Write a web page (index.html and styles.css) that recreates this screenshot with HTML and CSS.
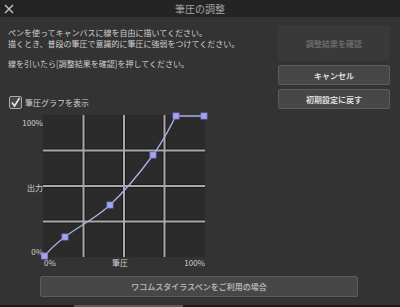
FILE: index.html
```html
<!DOCTYPE html>
<html lang="ja">
<head>
  <meta charset="UTF-8" />
  <title>筆圧の調整</title>
  <link rel="stylesheet" href="styles.css">
</head>
<body>
  <div class="dialog">
    <div class="titlebar">
      <svg class="close" width="10" height="10" viewBox="0 0 10 10">
        <path d="M1 1 L9 9 M9 1 L1 9" stroke="#c4c4c4" stroke-width="1.4" fill="none"/>
      </svg>
      <span class="title">筆圧の調整</span>
    </div>

    <div class="main">
      <div class="left">
        <div class="desc">
          <p>ペンを使ってキャンバスに線を自由に描いてください。<br>描くとき、普段の筆圧で意識的に筆圧に強弱をつけてください。</p>
          <p class="gap">線を引いたら[調整結果を確認]を押してください。</p>
        </div>

        <label class="check">
          <span class="box">
            <svg width="11" height="11" viewBox="0 0 11 11">
              <path d="M2 5.5 L4.5 9 L9.5 1" stroke="#e6e6e6" stroke-width="1.6" fill="none"/>
            </svg>
          </span>
          筆圧グラフを表示
        </label>

        <div class="graph-wrap">
          <div class="ylabels">
            <span>100%</span>
            <span>出力</span>
            <span>0%</span>
          </div>
          <svg class="graph" width="162" height="142" viewBox="0 0 162 142">
            <g stroke="#1b1b1b" stroke-width="4">
              <line x1="40.5" y1="0" x2="40.5" y2="142"/>
              <line x1="81" y1="0" x2="81" y2="142"/>
              <line x1="121.5" y1="0" x2="121.5" y2="142"/>
              <line x1="0" y1="35.5" x2="162" y2="35.5"/>
              <line x1="0" y1="71" x2="162" y2="71"/>
              <line x1="0" y1="106.5" x2="162" y2="106.5"/>
            </g>
            <g stroke="#a9a9a9" stroke-width="2">
              <line x1="40.5" y1="0" x2="40.5" y2="142"/>
              <line x1="81" y1="0" x2="81" y2="142"/>
              <line x1="121.5" y1="0" x2="121.5" y2="142"/>
              <line x1="0" y1="35.5" x2="162" y2="35.5"/>
              <line x1="0" y1="71" x2="162" y2="71"/>
              <line x1="0" y1="106.5" x2="162" y2="106.5"/>
            </g>
            <path d="M1.5 141 C4 138 11 130 22 122 C33 113 52 104 67 90 C82 76 99 55 110 40 C121 25 129 8 133 1 L161 1"
                  stroke="#b0b0e0" stroke-width="1.3" fill="none"/>
            <g fill="#a3a3f5" stroke="#8282d6" stroke-width="0.8">
              <rect x="-1.5" y="138" width="6" height="6"/>
              <rect x="19" y="119" width="6" height="6"/>
              <rect x="64" y="87" width="6" height="6"/>
              <rect x="107" y="37" width="6" height="6"/>
              <rect x="130" y="-2" width="6" height="6"/>
              <rect x="158" y="-2" width="6" height="6"/>
            </g>
          </svg>
          <div></div>
          <div class="xlabels">
            <span>0%</span>
            <span>筆圧</span>
            <span>100%</span>
          </div>
        </div>
      </div>

      <div class="right">
        <button class="btn confirm" disabled>調整結果を確認</button>
        <button class="btn">キャンセル</button>
        <button class="btn">初期設定に戻す</button>
      </div>
    </div>

    <button class="btn wacom">ワコムスタイラスペンをご利用の場合</button>
  </div>
  <div class="strip"><span></span></div>
</body>
</html>
```

FILE: styles.css
```css
body {
  margin: 0;
  width: 400px;
  height: 307px;
  overflow: hidden;
  background: #1f1f1f;
  font-family: "Noto Sans CJK JP", "Noto Sans", sans-serif;
  font-size: 8px;
  color: #cfcfcf;
}

.dialog {
  height: 305px;
  background: #333333;
}

.titlebar {
  position: relative;
  height: 17px;
  background: #242424;
  display: flex;
  align-items: center;
  justify-content: center;
}

.close {
  position: absolute;
  left: 4px;
  top: 4px;
}

.title {
  font-size: 10px;
  color: #a4a4a4;
  line-height: 17px;
}

.main {
  display: flex;
  padding: 8px 10px 0 8px;
}

.left {
  flex: 1;
}

.desc {
  padding-top: 2px;
}

.desc p {
  margin: 0;
  line-height: 11px;
}

.desc p.gap {
  margin-top: 9px;
}

.check {
  display: flex;
  align-items: center;
  gap: 3px;
  margin-top: 27px;
  margin-left: 1px;
  height: 13px;
  line-height: 13px;
}

.box {
  width: 11px;
  height: 11px;
  border: 1px solid #a8a8a8;
  border-radius: 2px;
  background: #464646;
  display: flex;
}

.graph-wrap {
  display: grid;
  grid-template-columns: 35px 162px;
  grid-template-rows: 142px 11px;
  margin-top: 6px;
}

.ylabels {
  display: flex;
  flex-direction: column;
  justify-content: space-between;
  align-items: flex-end;
  padding: 2px 0 0 0;
  line-height: 11px;
}

.graph {
  display: block;
  background: #2b2b2b;
  overflow: visible;
}

.xlabels {
  display: flex;
  justify-content: space-between;
  line-height: 11px;
  padding-left: 1px;
}

.right {
  width: 112px;
  display: flex;
  flex-direction: column;
  gap: 4px;
}

.btn {
  height: 20px;
  padding: 0;
  border: 1px solid #5c5c5c;
  border-radius: 2px;
  background: #474747;
  color: #dedede;
  font-family: inherit;
  font-size: 8px;
  font-weight: bold;
}

.btn.confirm {
  height: 36px;
  border-color: #393939;
  background: #393939;
  color: #6a6a6a;
}

.btn.wacom {
  display: block;
  width: 318px;
  height: 21px;
  margin: 8px 0 0 40px;
  color: #adadad;
}

.strip {
  height: 2px;
  background: #1c1c1c;
}

.strip span {
  display: block;
  width: 109px;
  height: 2px;
  margin-left: 74px;
  background: #5a5a5a;
}
```
